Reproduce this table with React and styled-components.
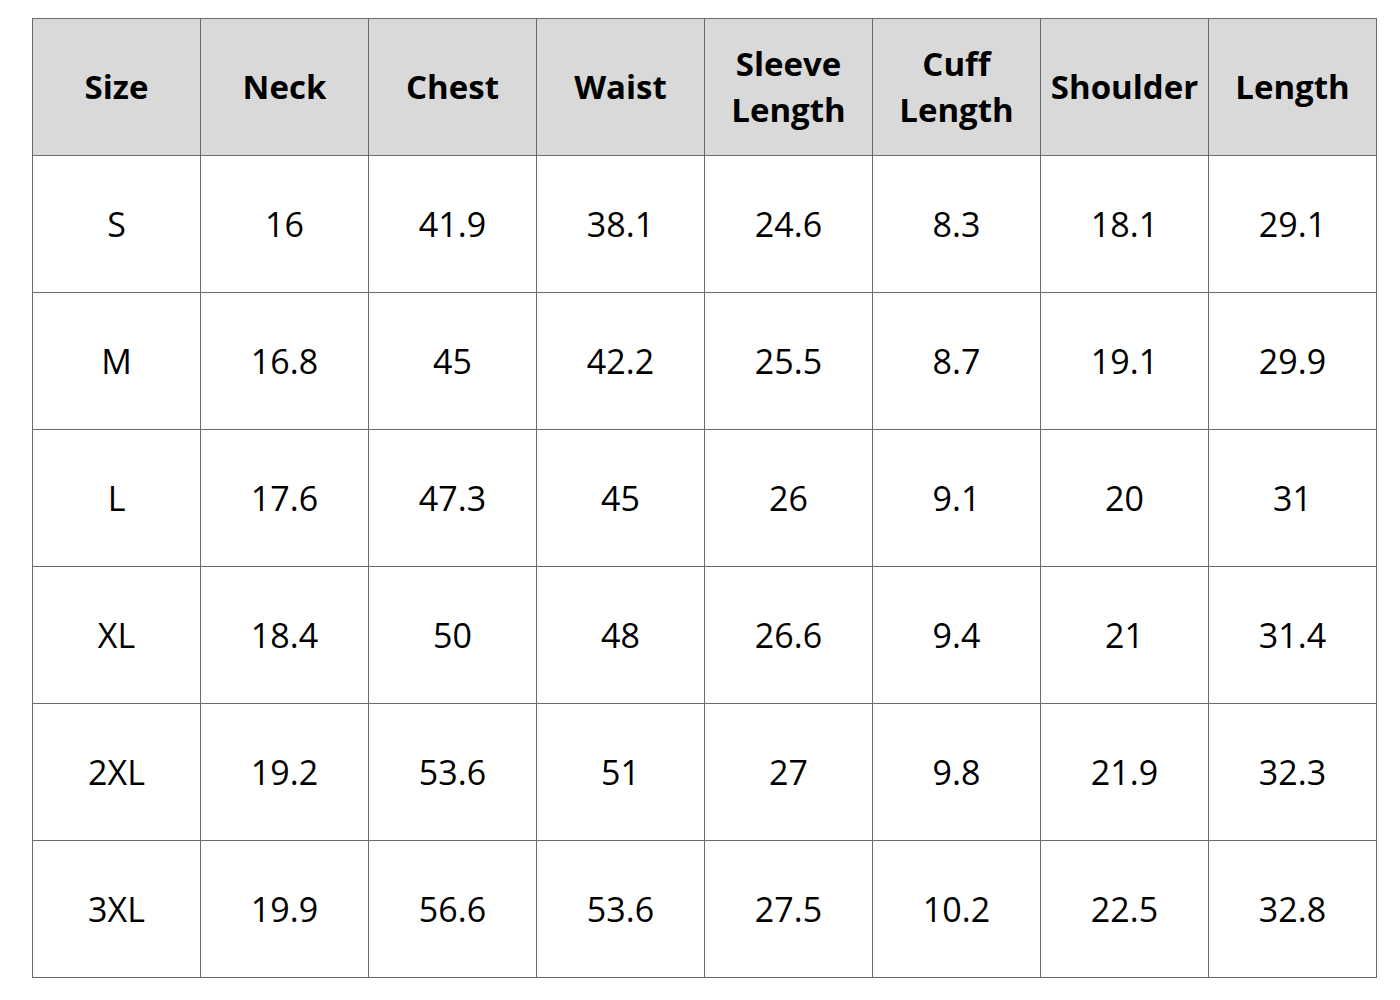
import React from 'react'
import styled, { createGlobalStyle } from 'styled-components'

const GlobalStyle = createGlobalStyle`
    body {
        margin: 0;
        background: #ffffff;
        font-family: "Open Sans", "Liberation Sans", sans-serif;
    }
`

const Page = styled.div`
    padding: 18px 0 0 32px;
`

const Table = styled.table`
    border-collapse: collapse;
    table-layout: fixed;
    width: 1345px;
    color: #000;
`

const HeadCell = styled.th`
    height: 136px;
    padding: 0;
    background: #d9d9d9;
    border: 1.5px solid #6a6a6a;
    font-size: 33px;
    font-weight: 700;
    line-height: 46px;
    text-align: center;
    vertical-align: middle;
`

const Cell = styled.td`
    height: 136px;
    padding: 0;
    border: 1.5px solid #6a6a6a;
    font-size: 34px;
    font-weight: 400;
    text-align: center;
    vertical-align: middle;
`

const headers = [
    ['Size'],
    ['Neck'],
    ['Chest'],
    ['Waist'],
    ['Sleeve', 'Length'],
    ['Cuff', 'Length'],
    ['Shoulder'],
    ['Length'],
]

const rows = [
    ['S', '16', '41.9', '38.1', '24.6', '8.3', '18.1', '29.1'],
    ['M', '16.8', '45', '42.2', '25.5', '8.7', '19.1', '29.9'],
    ['L', '17.6', '47.3', '45', '26', '9.1', '20', '31'],
    ['XL', '18.4', '50', '48', '26.6', '9.4', '21', '31.4'],
    ['2XL', '19.2', '53.6', '51', '27', '9.8', '21.9', '32.3'],
    ['3XL', '19.9', '56.6', '53.6', '27.5', '10.2', '22.5', '32.8'],
]

const App = () => {
    return (
        <Page>
            <GlobalStyle />
            <Table>
                <thead>
                    <tr>
                        {headers.map((lines, i) => (
                            <HeadCell key={i}>
                                {lines.map((l, j) => (
                                    <div key={j}>{l}</div>
                                ))}
                            </HeadCell>
                        ))}
                    </tr>
                </thead>
                <tbody>
                    {rows.map((row, i) => (
                        <tr key={i}>
                            {row.map((v, j) => (
                                <Cell key={j}>{v}</Cell>
                            ))}
                        </tr>
                    ))}
                </tbody>
            </Table>
        </Page>
    )
}

export default App
